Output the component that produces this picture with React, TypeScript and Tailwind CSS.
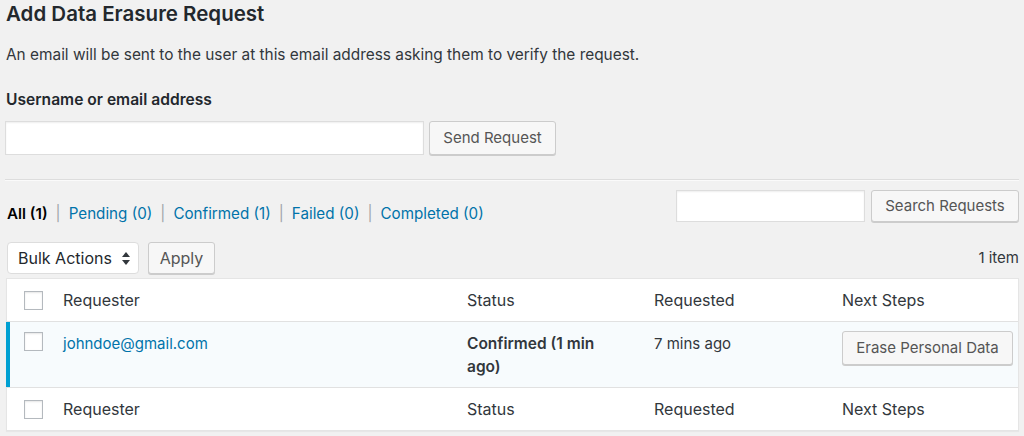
import React from "react";

const font = { fontFamily: "Inter, 'Liberation Sans', sans-serif" };

function Checkbox() {
  return (
    <div className="h-[19px] w-[19px] border border-[#b4b9be] bg-white shadow-[inset_0_1px_2px_rgba(0,0,0,0.1)]" />
  );
}

function Btn({ children, className = "" }: { children: React.ReactNode; className?: string }) {
  return (
    <button
      className={
        "flex items-center justify-center rounded-[3px] border border-[#cccccc] bg-[#f7f7f7] text-[15px] text-[#555555] shadow-[0_1px_0_#cccccc] " +
        className
      }
    >
      {children}
    </button>
  );
}

function HeadRow({ border }: { border: string }) {
  return (
    <div
      className={
        "grid h-[43px] grid-cols-[46px_404px_187px_188px_1fr] items-center bg-white text-[16px] text-[#32373c] " +
        border
      }
    >
      <div className="flex pl-[17px]">
        <Checkbox />
      </div>
      <div className="pl-[10px]">Requester</div>
      <div className="pl-[10px]">Status</div>
      <div className="pl-[10px]">Requested</div>
      <div className="pl-[10px]">Next Steps</div>
    </div>
  );
}

export default function App() {
  return (
    <div
      className="h-[436px] w-[1024px] overflow-hidden bg-[#f1f1f1] pl-[5px] pr-[5px] text-[#32373c]"
      style={font}
    >
      <h2 className="pl-[1px] text-[20.5px] font-semibold leading-[27px] text-[#23282d]">
        Add Data Erasure Request
      </h2>
      <p className="mt-[17px] pl-[1px] text-[15.4px] leading-[22px] text-[#32373c]">
        An email will be sent to the user at this email address asking them to verify the request.
      </p>
      <div className="mt-[24px] pl-[1px] text-[15.6px] font-semibold leading-[20px] text-[#23282d]">
        Username or email address
      </div>
      <div className="mt-[11px] flex gap-[5px]">
        <div className="h-[34px] w-[419px] border border-[#dddddd] bg-white shadow-[inset_0_1px_2px_rgba(0,0,0,0.07)]" />
        <Btn className="h-[34px] w-[127px]">Send Request</Btn>
      </div>
      <div className="mt-[24px] h-[2px] border-t border-b border-t-[#dddddd] border-b-[#fafafa]" />

      <div className="mt-[9px] flex items-start justify-between">
        <div className="flex items-center pl-[2px] pt-[14px] text-[15.2px] leading-[20px]">
          <span className="font-semibold text-black">All (1)</span>
          <span className="px-[8px] text-[#a0a5aa]">|</span>
          <span className="text-[#0073aa]">Pending (0)</span>
          <span className="px-[8px] text-[#a0a5aa]">|</span>
          <span className="text-[#0073aa]">Confirmed (1)</span>
          <span className="px-[8px] text-[#a0a5aa]">|</span>
          <span className="text-[#0073aa]">Failed (0)</span>
          <span className="px-[8px] text-[#a0a5aa]">|</span>
          <span className="text-[#0073aa]">Completed (0)</span>
        </div>
        <div className="flex gap-[6px]">
          <div className="h-[32px] w-[189px] border border-[#dddddd] bg-white shadow-[inset_0_1px_2px_rgba(0,0,0,0.07)]" />
          <Btn className="h-[32px] w-[148px]">Search Requests</Btn>
        </div>
      </div>

      <div className="mt-[18px] flex items-center justify-between">
        <div className="flex gap-[9px] pl-[2px]">
          <div className="flex h-[32px] w-[132px] items-center justify-between rounded-[4px] border border-[#dddddd] bg-white pl-[10px] pr-[8px] text-[16px] text-[#23282d]">
            <span>Bulk Actions</span>
            <svg width="8" height="13" viewBox="0 0 8 13">
              <path d="M4 0 L8 5 L0 5 Z" fill="#32373c" />
              <path d="M4 13 L8 8 L0 8 Z" fill="#32373c" />
            </svg>
          </div>
          <Btn className="h-[32px] w-[67px] text-[16px]">Apply</Btn>
        </div>
        <div className="text-[15px] text-[#32373c]">1 item</div>
      </div>

      <div className="ml-[1px] mt-[4px] border border-[#e5e5e5] bg-white shadow-[0_1px_1px_rgba(0,0,0,0.04)]">
        <HeadRow border="border-b border-[#e1e1e1]" />
        <div className="-ml-px grid h-[65px] grid-cols-[43px_404px_187px_188px_1fr] border-l-4 border-[#00a0d2] bg-[#f7fbfd] text-[15px]">
          <div className="flex pl-[14px] pt-[10px]">
            <Checkbox />
          </div>
          <div className="pl-[10px] pt-[10px] leading-[23px] text-[#0073aa]">johndoe@gmail.com</div>
          <div className="pl-[10px] pr-[20px] pt-[10px] text-[15.5px] font-semibold leading-[23px] text-[#32373c]">
            Confirmed (1 min ago)
          </div>
          <div className="pl-[10px] pt-[10px] leading-[23px] text-[#32373c]">7 mins ago</div>
          <div className="pl-[10px] pt-[9px]">
            <Btn className="h-[34px] w-[171px]">Erase Personal Data</Btn>
          </div>
        </div>
        <HeadRow border="border-t border-[#e1e1e1]" />
      </div>
    </div>
  );
}
